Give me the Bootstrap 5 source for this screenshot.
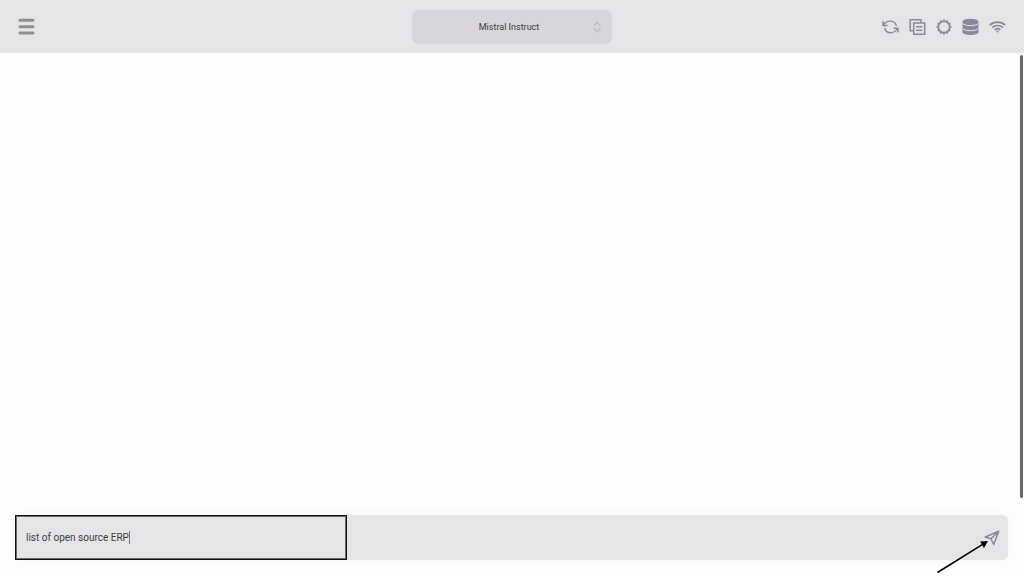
<!DOCTYPE html>
<html lang="en">
<head>
<meta charset="utf-8">
<meta name="viewport" content="width=device-width, initial-scale=1">
<title>Chat</title>
<link href="https://cdn.jsdelivr.net/npm/bootstrap@5.3.0/dist/css/bootstrap.min.css" rel="stylesheet">
<style>
  body { font-family: Roboto, sans-serif; background: #fefefe; color: #3c3c41; }
  .topbar { height: 53px; background: #e5e5e7; padding: 0 18px; }
  .topbar-side { flex: 1 1 0; }
  .icon-btn { border: 0; background: none; padding: 0; line-height: 0; color: #8b879c; }
  .icon-btn svg { display: block; }
  .icon-row { gap: 9px; }
  .menu-btn { color: #8f9085; }
  .model-picker { width: 200px; }
  .model-select { display: block; appearance: none; width: 100%; height: 34px; border: 0; border-radius: 6px; background: #d7d6da;
    font-family: Roboto, sans-serif; font-size: 9px; color: #3c3c41; padding: 2px 12px 0 6px; text-align: center; text-align-last: center; }
  .model-chevrons { right: 10px; top: 11px; pointer-events: none; color: #bcbbc1; }
  .scroll-thumb { top: 2px; bottom: 1px; right: 1px; width: 3px; border-radius: 2px; background: #686868; }
  .composer-area { padding: 16px 16px 16px 15px; }
  .composer { height: 45px; background: #e5e5e7; border-radius: 6px; box-shadow: 0 0 16px rgba(0,0,0,.04); padding-right: 8px; }
  .prompt-box { width: 332px; height: 45px; border: 1px solid #111; box-shadow: inset 0 0 0 1px #66686a; padding-left: 10px; }
  .prompt-input { width: 104px; height: 13px; border: 0; border-right: 1px solid #77777c; border-radius: 0; background: none; padding: 0; outline: 0;
    font-family: Roboto, sans-serif; font-size: 10px; line-height: 13px; color: #3c3c41; }
  .pointer-arrow { right: 35px; bottom: 2px; pointer-events: none; }
</style>
</head>
<body>
<div class="d-flex flex-column vh-100 overflow-hidden">
  <header class="topbar d-flex align-items-center flex-shrink-0">
    <div class="topbar-side d-flex">
      <button type="button" class="icon-btn menu-btn" aria-label="Menu">
        <svg width="17" height="17" viewBox="0 0 17 17" stroke="currentColor" stroke-width="3" stroke-linecap="round"><path d="M2 2.300h13M2 8.700h13M2 15.100h13"/></svg>
      </button>
    </div>
    <div class="model-picker position-relative">
      <select class="model-select" aria-label="Model"><option>Mistral Instruct</option></select>
      <svg class="model-chevrons position-absolute" width="10" height="12" viewBox="0 0 10 12" fill="none" stroke="currentColor" stroke-width="1.300"><path d="M1.700 4.700 5 1.200l3.300 3.500M1.700 7.300 5 10.800l3.300-3.500"/></svg>
    </div>
    <div class="topbar-side icon-row d-flex justify-content-end">
      <button type="button" class="icon-btn" aria-label="Regenerate">
        <svg width="18" height="18" viewBox="0 0 18 18" fill="none" stroke="currentColor" stroke-width="1.400"><path d="M2 3v4.500h4.500M2.300 7.300C5 2 13.500 1.200 15.500 8M17 14.500V10.200h-4.500M16.400 10.500C13 16 5.500 16.500 3.500 10"/></svg>
      </button>
      <button type="button" class="icon-btn" aria-label="Copy conversation">
        <svg width="18" height="18" viewBox="0 0 18 18" fill="none" stroke="currentColor" stroke-width="1.500"><path d="M5 12.800H2.200V1.800H13v3"/><path d="M5.700 5h11v11.200h-11zM8 8.700h6.300M8 12.300h6.300"/></svg>
      </button>
      <button type="button" class="icon-btn" aria-label="Settings">
        <svg width="18" height="18" viewBox="0 0 18 18" fill="none" stroke="currentColor"><circle cx="9" cy="9" r="5.700" stroke-width="1.700"/><circle cx="9" cy="9" r="6.700" stroke-width="1.500" pathLength="48" stroke-dasharray="2 2" stroke-dashoffset="1"/></svg>
      </button>
      <button type="button" class="icon-btn" aria-label="Local documents">
        <svg width="17" height="18" viewBox="0 0 17 18" fill="currentColor"><ellipse cx="8.500" cy="3.600" rx="8" ry="2.900"/><path d="M.5 3.600h16v10.400c0 4-16 4-16 0z"/><path d="M.5 10.300c2 3.200 14 3.200 16 0M.5 5.200c2 3.200 14 3.200 16 0" fill="none" stroke="#e5e5e7" stroke-width="1"/></svg>
      </button>
      <button type="button" class="icon-btn" aria-label="Network">
        <svg width="18" height="18" viewBox="0 0 18 18" fill="none" stroke="currentColor" stroke-width="1.700"><path d="M1.800 7.100C5.800 3.200 13.200 3.200 17.200 7.100M4.200 9.500c3-2.700 7.600-2.700 10.600 0M6.700 11.800c1.600-1.300 4-1.300 5.600 0"/><circle cx="9.500" cy="13.500" r="1.100" fill="currentColor" stroke="none"/></svg>
      </button>
    </div>
  </header>

  <main class="flex-grow-1 position-relative">
    <div class="scroll-thumb position-absolute"></div>
  </main>

  <footer class="composer-area position-relative flex-shrink-0">
    <form class="composer d-flex align-items-center justify-content-between">
      <label class="prompt-box d-flex align-items-center">
        <input class="prompt-input" type="text" value="list of open source ERP" aria-label="Message">
      </label>
      <button type="button" class="icon-btn" aria-label="Send">
        <svg width="16" height="16" viewBox="0 0 16 16" fill="none" stroke="currentColor" stroke-width="1.500" stroke-linejoin="round"><path d="M14.800 1.300 1.200 7l5.800 1.800 2.700 5.700zM7 8.800l7.800-7.500"/></svg>
      </button>
    </form>
    <svg class="pointer-arrow position-absolute" width="53" height="34" viewBox="0 0 53 34"><path d="M1.500 32.500 47 4.200" stroke="#000" stroke-width="1.500"/><path d="M52 1l-8 .6 4 6.400z" fill="#000"/></svg>
  </footer>
</div>
<script src="https://cdn.jsdelivr.net/npm/bootstrap@5.3.0/dist/js/bootstrap.bundle.min.js"></script>
</body>
</html>
